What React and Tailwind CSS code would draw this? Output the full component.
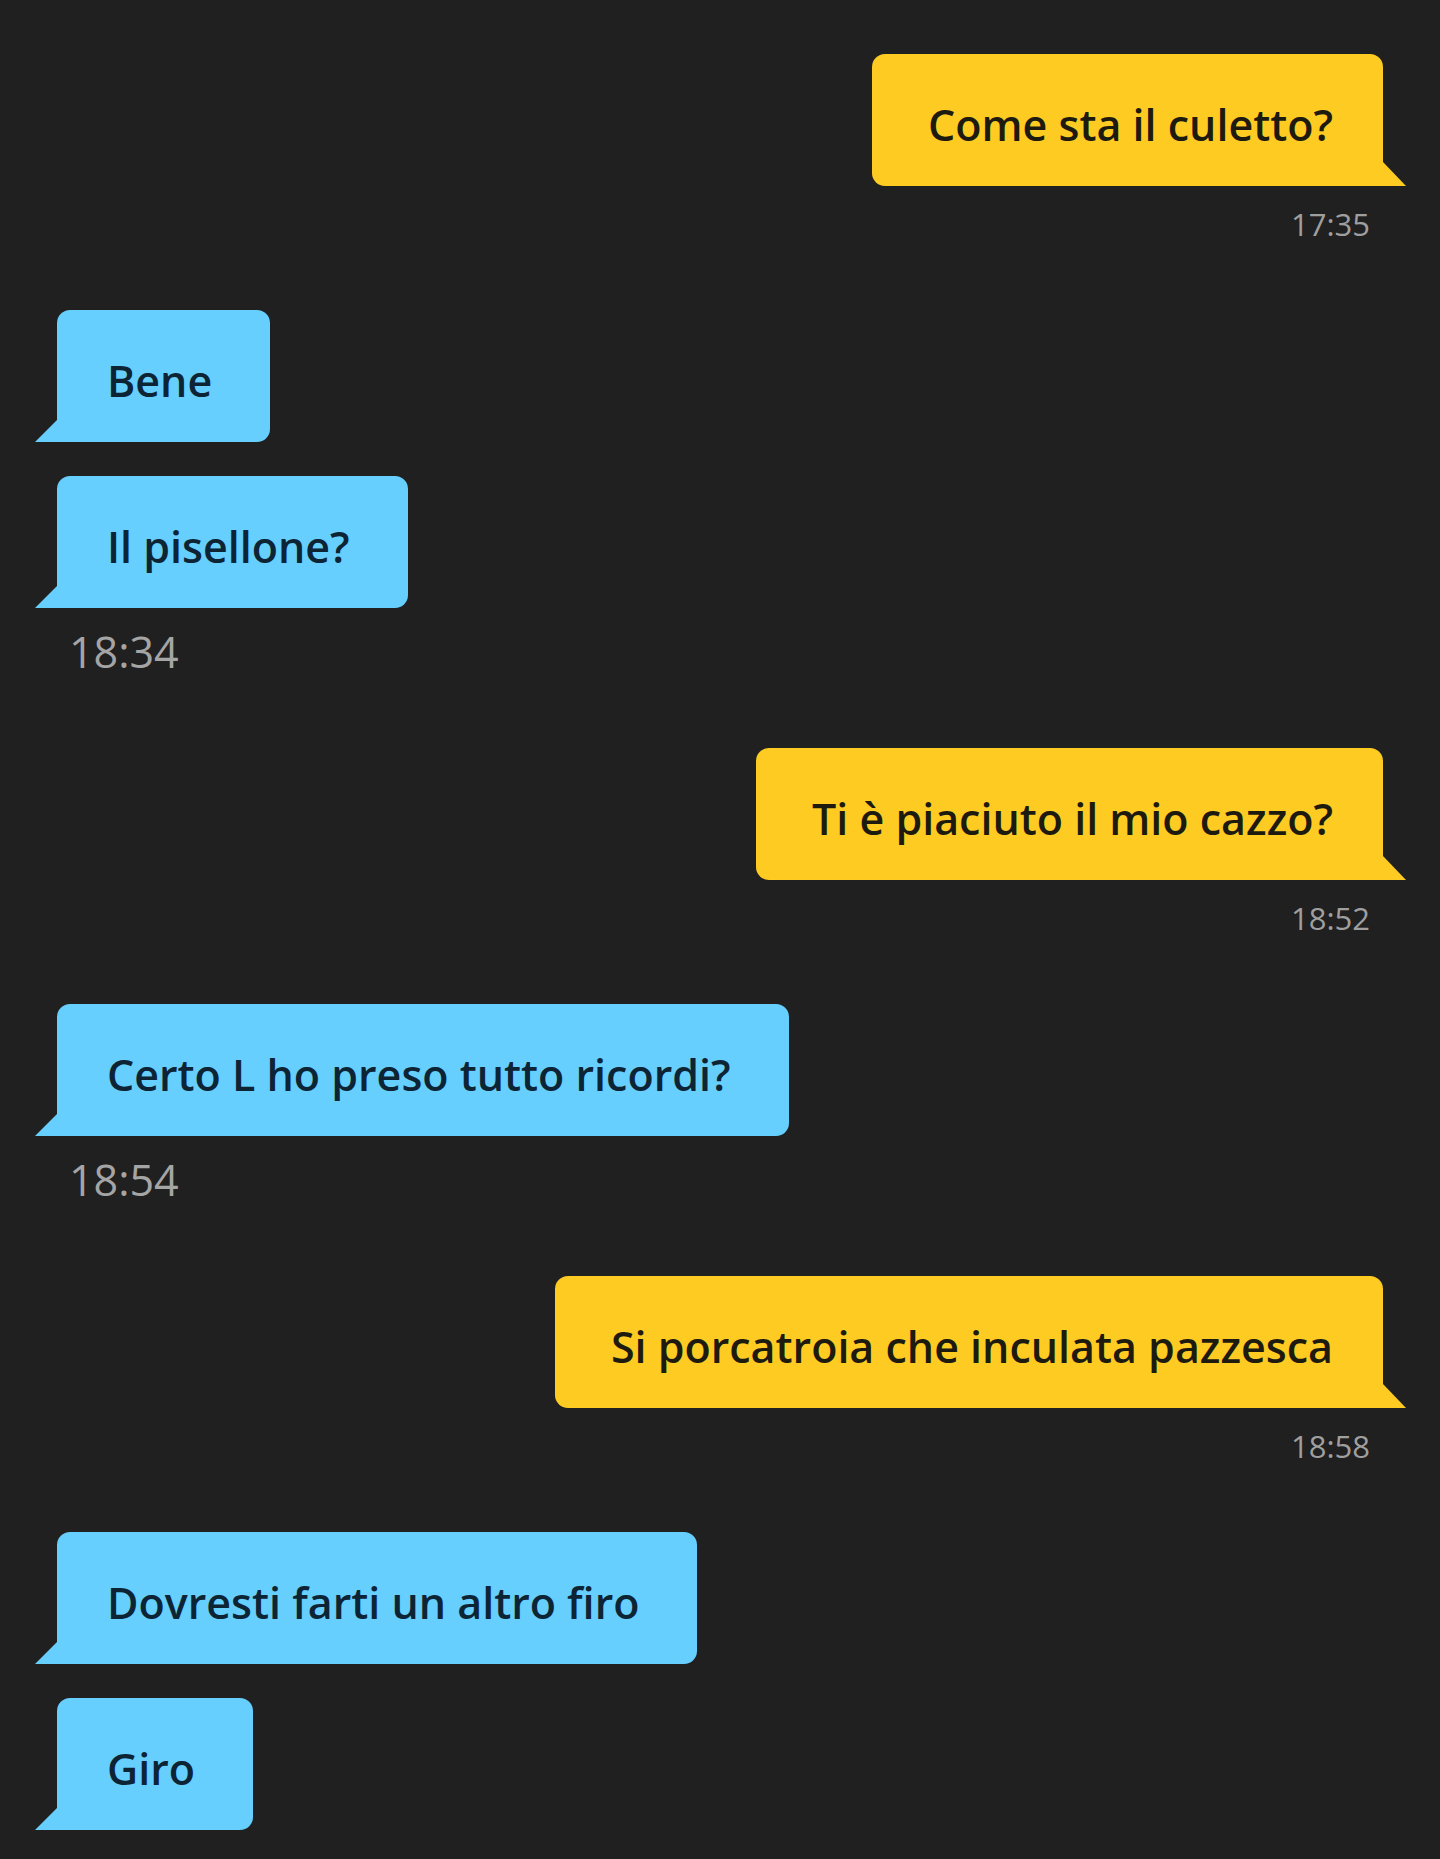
import React from 'react';

const thread = [
  { mine: true, msgs: ['Come sta il culetto?'], time: '17:35' },
  { mine: false, msgs: ['Bene', 'Il pisellone?'], time: '18:34' },
  { mine: true, msgs: ['Ti è piaciuto il mio cazzo?'], time: '18:52' },
  { mine: false, msgs: ['Certo L ho preso tutto ricordi?'], time: '18:54' },
  { mine: true, msgs: ['Si porcatroia che inculata pazzesca'], time: '18:58' },
  { mine: false, msgs: ['Dovresti farti un altro firo', 'Giro'], time: null },
];

function Bubble({ mine, text }) {
  if (mine) {
    return (
      <div className="relative self-end bg-[#fdcb22] text-[#1d1a10] rounded-t-[13px] rounded-bl-[13px] pl-[56px] pr-[50px] pt-[45px] pb-[35px] text-[43px] leading-[52px] font-semibold whitespace-nowrap">
        {text}
        <svg className="absolute right-[-23px] bottom-0 w-[23px] h-[24px]" viewBox="0 0 23 24">
          <polygon points="0,0 23,24 0,24" fill="#fdcb22" />
        </svg>
      </div>
    );
  }
  return (
    <div className="relative self-start bg-[#66cffe] text-[#0d2434] rounded-t-[13px] rounded-br-[13px] pl-[50px] pr-[58px] pt-[45px] pb-[35px] text-[43px] leading-[52px] font-semibold whitespace-nowrap">
      {text}
      <svg className="absolute left-[-22px] bottom-0 w-[22px] h-[22px]" viewBox="0 0 22 22">
        <polygon points="22,0 0,22 22,22" fill="#66cffe" />
      </svg>
    </div>
  );
}

export default function App() {
  return (
    <div
      className="min-h-screen bg-[#202020] px-[57px] pt-[54px] pb-[28px] flex flex-col"
      style={{ fontFamily: '"Open Sans", "Noto Sans", sans-serif' }}
    >
      {thread.map((group, gi) => (
        <div key={gi} className="flex flex-col">
          <div className="flex flex-col gap-[34px]">
            {group.msgs.map((m) => (
              <Bubble key={m} mine={group.mine} text={m} />
            ))}
          </div>
          {group.time &&
            (group.mine ? (
              <div className="self-end mt-[23px] mb-[71px] pr-[13px] text-[31px] leading-[30px] text-[#9f9f9f]">
                {group.time}
              </div>
            ) : (
              <div className="self-start mt-[24px] mb-[76px] pl-[12px] text-[43px] leading-[40px] text-[#a5a5a5]">
                {group.time}
              </div>
            ))}
        </div>
      ))}
    </div>
  );
}
